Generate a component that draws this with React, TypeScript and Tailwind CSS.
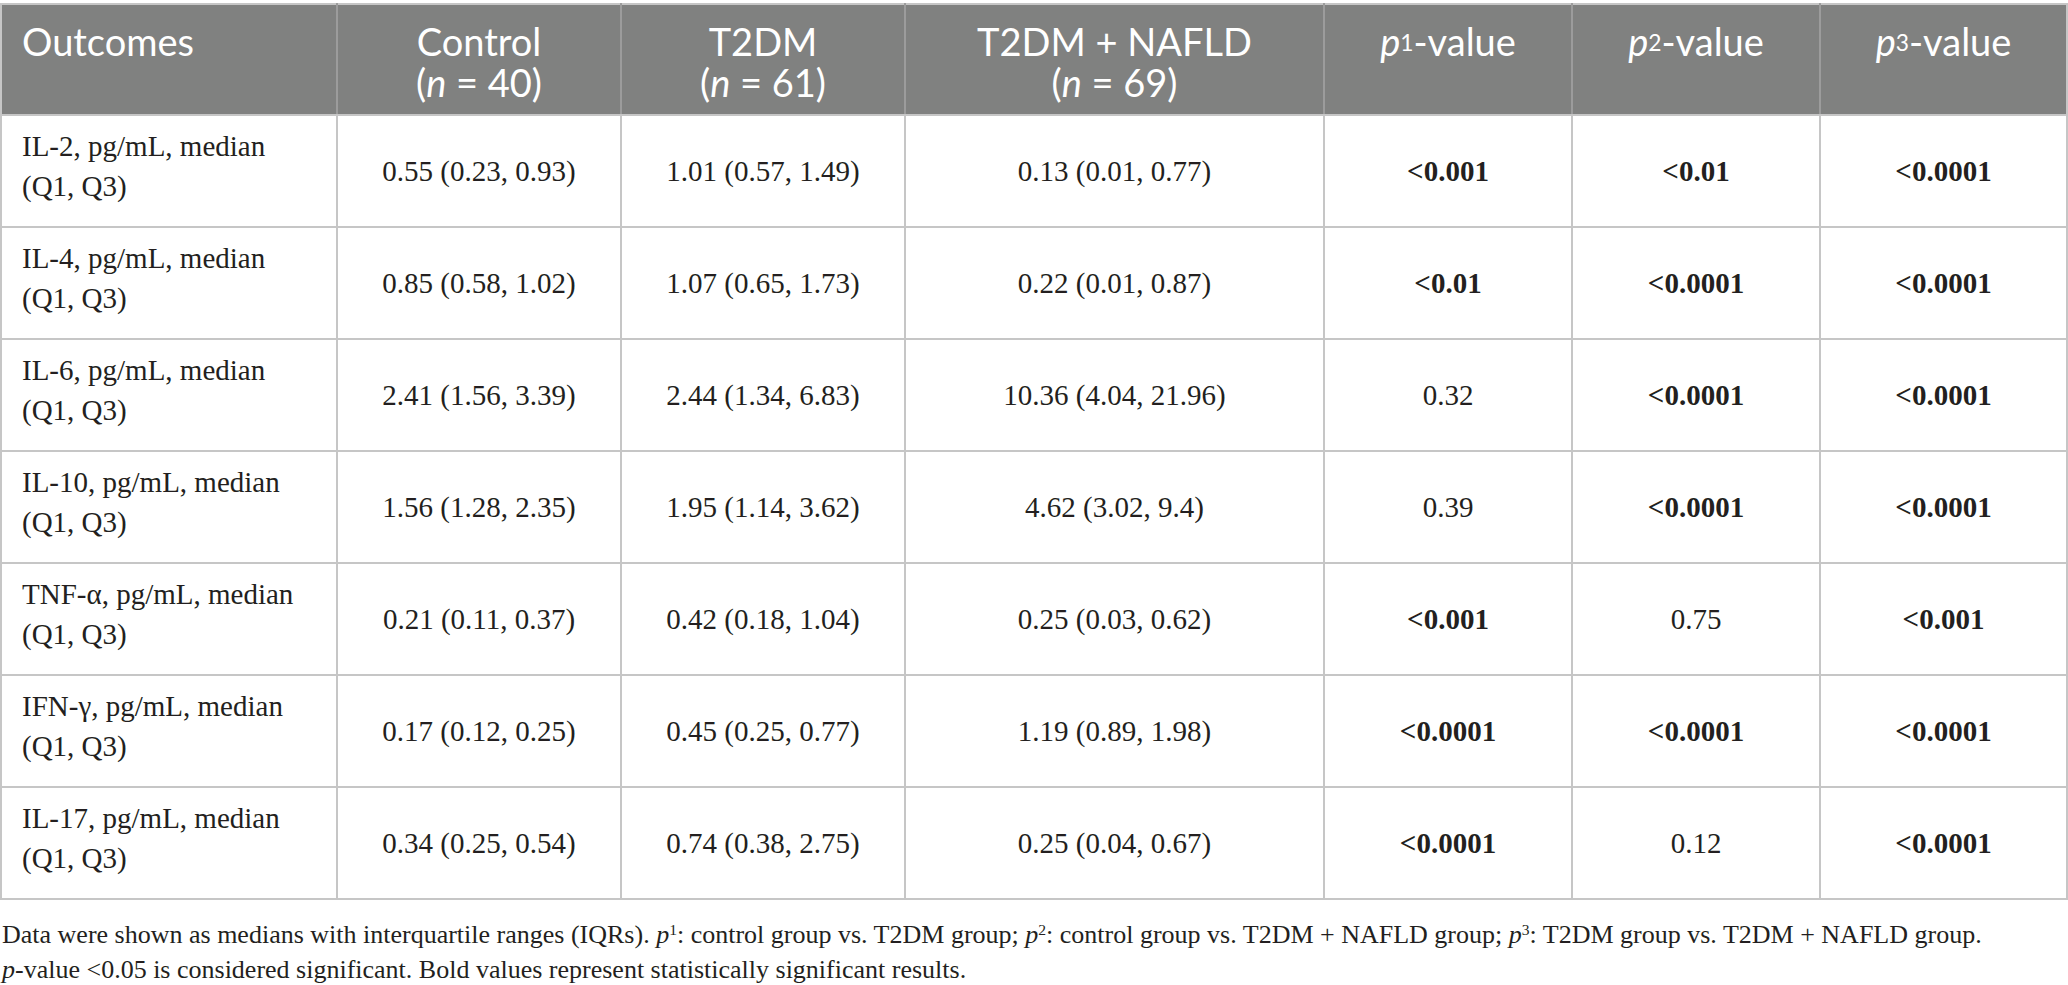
const rows = [
  { label: 'IL-2', c: '0.55 (0.23, 0.93)', t: '1.01 (0.57, 1.49)', n: '0.13 (0.01, 0.77)', p1: ['<0.001', true], p2: ['<0.01', true], p3: ['<0.0001', true] },
  { label: 'IL-4', c: '0.85 (0.58, 1.02)', t: '1.07 (0.65, 1.73)', n: '0.22 (0.01, 0.87)', p1: ['<0.01', true], p2: ['<0.0001', true], p3: ['<0.0001', true] },
  { label: 'IL-6', c: '2.41 (1.56, 3.39)', t: '2.44 (1.34, 6.83)', n: '10.36 (4.04, 21.96)', p1: ['0.32', false], p2: ['<0.0001', true], p3: ['<0.0001', true] },
  { label: 'IL-10', c: '1.56 (1.28, 2.35)', t: '1.95 (1.14, 3.62)', n: '4.62 (3.02, 9.4)', p1: ['0.39', false], p2: ['<0.0001', true], p3: ['<0.0001', true] },
  { label: 'TNF-α', c: '0.21 (0.11, 0.37)', t: '0.42 (0.18, 1.04)', n: '0.25 (0.03, 0.62)', p1: ['<0.001', true], p2: ['0.75', false], p3: ['<0.001', true] },
  { label: 'IFN-γ', c: '0.17 (0.12, 0.25)', t: '0.45 (0.25, 0.77)', n: '1.19 (0.89, 1.98)', p1: ['<0.0001', true], p2: ['<0.0001', true], p3: ['<0.0001', true] },
  { label: 'IL-17', c: '0.34 (0.25, 0.54)', t: '0.74 (0.38, 2.75)', n: '0.25 (0.04, 0.67)', p1: ['<0.0001', true], p2: ['0.12', false], p3: ['<0.0001', true] },
] as const;

const serif = "font-['Liberation_Serif','Times_New_Roman',serif]";

function PCell({ v }: { v: readonly [string, boolean] }) {
  return (
    <td className={`border-2 border-[#c6c6c6] text-center align-middle ${v[1] ? 'font-bold' : ''}`}>
      {v[0]}
    </td>
  );
}

function Sup({ n }: { n: number }) {
  return (
    <>
      <i>p</i>
      <sup className="text-[0.6em] relative -top-[0.2em]">{n}</sup>-value
    </>
  );
}

export default function App() {
  return (
    <div className="w-[2068px] h-[985px] bg-white overflow-hidden pt-[3px]">
      <table className={`table-fixed border-collapse w-[2066px] text-[29px] leading-[40px] text-[#231f20] ${serif}`}>
        <colgroup>
          <col className="w-[336px]" />
          <col className="w-[284px]" />
          <col className="w-[284px]" />
          <col className="w-[419px]" />
          <col className="w-[248px]" />
          <col className="w-[248px]" />
          <col className="w-[247px]" />
        </colgroup>
        <thead>
          <tr className="h-[111px] bg-[#808180] text-white font-['Lato','Open_Sans',sans-serif] text-[38px] leading-[41px]">
            <th className="border-2 border-[#c6c6c6] border-r-[#9c9c9c] align-top text-left font-normal pl-[20px] pt-[16px]">Outcomes</th>
            <th className="border-2 border-[#c6c6c6] border-x-[#9c9c9c] align-top font-normal pt-[16px]">
              Control<br />(<i>n</i> = 40)
            </th>
            <th className="border-2 border-[#c6c6c6] border-x-[#9c9c9c] align-top font-normal pt-[16px]">
              T2DM<br />(<i>n</i> = 61)
            </th>
            <th className="border-2 border-[#c6c6c6] border-x-[#9c9c9c] align-top font-normal pt-[16px]">
              T2DM + NAFLD<br />(<i>n</i> = 69)
            </th>
            <th className="border-2 border-[#c6c6c6] border-x-[#9c9c9c] align-top font-normal pt-[16px]">
              <Sup n={1} />
            </th>
            <th className="border-2 border-[#c6c6c6] border-x-[#9c9c9c] align-top font-normal pt-[16px]">
              <Sup n={2} />
            </th>
            <th className="border-2 border-[#c6c6c6] border-l-[#9c9c9c] align-top font-normal pt-[16px]">
              <Sup n={3} />
            </th>
          </tr>
        </thead>
        <tbody>
          {rows.map((r) => (
            <tr key={r.label} className="h-[112px]">
              <td className="border-2 border-[#c6c6c6] pl-[20px] pb-[10px] align-middle">
                {r.label}, pg/mL, median
                <br />
                (Q1, Q3)
              </td>
              <td className="border-2 border-[#c6c6c6] text-center align-middle">{r.c}</td>
              <td className="border-2 border-[#c6c6c6] text-center align-middle">{r.t}</td>
              <td className="border-2 border-[#c6c6c6] text-center align-middle">{r.n}</td>
              <PCell v={r.p1} />
              <PCell v={r.p2} />
              <PCell v={r.p3} />
            </tr>
          ))}
        </tbody>
      </table>
      <p className={`${serif} text-[26px] leading-[35px] text-[#231f20] pl-[2px] pt-[17px]`}>
        Data were shown as medians with interquartile ranges (IQRs). <i>p</i>
        <sup className="text-[0.6em]">1</sup>: control group vs. T2DM group; <i>p</i>
        <sup className="text-[0.6em]">2</sup>: control group vs. T2DM + NAFLD group; <i>p</i>
        <sup className="text-[0.6em]">3</sup>: T2DM group vs. T2DM + NAFLD group.
        <br />
        <i>p</i>-value &lt;0.05 is considered significant. Bold values represent statistically significant results.
      </p>
    </div>
  );
}
